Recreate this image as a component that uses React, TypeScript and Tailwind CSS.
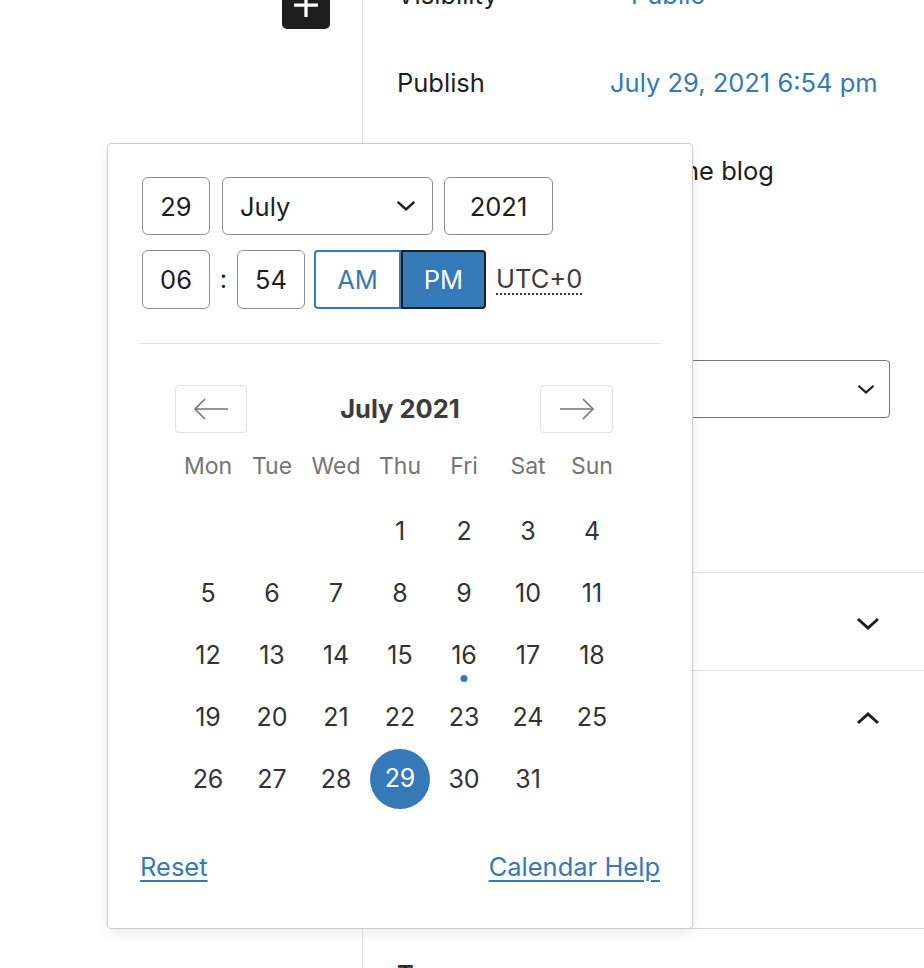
import React from "react";

const BLUE = "#3579b8";

function ChevronDown({ className = "" }: { className?: string }) {
  return (
    <svg viewBox="0 0 24 14" className={className} fill="none" stroke="currentColor" strokeWidth="3">
      <path d="M2 2 L12 11 L22 2" />
    </svg>
  );
}

function ChevronUp({ className = "" }: { className?: string }) {
  return (
    <svg viewBox="0 0 24 14" className={className} fill="none" stroke="currentColor" strokeWidth="3">
      <path d="M2 12 L12 3 L22 12" />
    </svg>
  );
}

function ArrowLeft() {
  return (
    <svg viewBox="0 0 36 24" className="w-[36px] h-[24px]" fill="none" stroke="#757575" strokeWidth="1.6">
      <path d="M2 12 H35" />
      <path d="M12 2 L2 12 L12 22" />
    </svg>
  );
}

function ArrowRight() {
  return (
    <svg viewBox="0 0 36 24" className="w-[36px] h-[24px]" fill="none" stroke="#757575" strokeWidth="1.6">
      <path d="M1 12 H34" />
      <path d="M24 2 L34 12 L24 22" />
    </svg>
  );
}

const weekdays = ["Mon", "Tue", "Wed", "Thu", "Fri", "Sat", "Sun"];

export default function App() {
  const cells: (number | null)[] = [null, null, null];
  for (let d = 1; d <= 31; d++) cells.push(d);
  while (cells.length % 7 !== 0) cells.push(null);

  return (
    <div
      className="relative w-[924px] h-[968px] overflow-hidden bg-white text-[#1e1e1e]"
      style={{ fontFamily: "Inter, 'Noto Sans', sans-serif" }}
    >
      <div className="flex h-full">
        {/* Editor canvas */}
        <div className="w-[362px] shrink-0">
          <div className="ml-[282px] mt-[-19px] w-[48px] h-[48px] rounded-[5px] bg-[#1e1e1e] flex items-center justify-center">
            <svg viewBox="0 0 24 24" className="w-[26px] h-[26px]" fill="none" stroke="white" strokeWidth="3">
              <path d="M12 1 V23 M1 12 H23" />
            </svg>
          </div>
        </div>
        <div className="w-px bg-[#e0e0e0] shrink-0" />
        {/* Sidebar */}
        <div className="flex-1 flex flex-col text-[25.5px]">
          <div className="px-[34px] pb-[12px] shrink-0">
            <div className="h-[88px] mt-[-49px] flex items-center">
              <span className="w-[234px]">Visibility</span>
              <span style={{ color: BLUE }}>Public</span>
            </div>
            <div className="h-[88px] flex items-center">
              <span className="w-[213px]">Publish</span>
              <span style={{ color: BLUE }}>July 29, 2021 6:54 pm</span>
            </div>
            <div className="h-[88px] flex items-center gap-[16px]">
              <span className="w-[32px] h-[32px] border-2 border-[#1e1e1e] rounded-[4px]" />
              <span className="ml-[10px]">Stick to the top of the blog</span>
            </div>
            <div className="h-[89px] flex items-center gap-[16px]">
              <span className="w-[32px] h-[32px] border-2 border-[#1e1e1e] rounded-[4px]" />
              <span>Pending review</span>
            </div>
            <div className="text-[22px] h-[56px] flex items-center">AUTHOR</div>
            <div className="h-[58px] border border-[#757575] rounded-[4px] flex items-center justify-between px-[16px]">
              <span>admin</span>
              <ChevronDown className="w-[18px] h-[11px] mr-[-2px]" />
            </div>
            <div className="h-[142px]" />
          </div>
          <div className="h-px bg-[#e0e0e0] shrink-0" />
          <div className="h-[97px] px-[34px] flex items-center justify-between shrink-0">
            <span className="font-semibold">Categories</span>
            <ChevronDown className="w-[24px] h-[14px] mr-[10px] mt-[4px]" />
          </div>
          <div className="h-px bg-[#e0e0e0] shrink-0" />
          <div className="h-[257px] px-[34px] pt-[40px] flex items-start justify-between shrink-0">
            <span className="font-semibold">Featured image</span>
            <ChevronUp className="w-[24px] h-[14px] mr-[10px]" />
          </div>
          <div className="h-px bg-[#d6d6d6] shrink-0" />
          <div className="px-[34px] pt-[27px] flex justify-between shrink-0">
            <span className="font-semibold text-[#2c2c2c]">Tags</span>
          </div>
        </div>
      </div>

      {/* Popover */}
      <div className="absolute left-[107px] top-[143px] w-[586px] h-[786px] bg-white border border-[#cccccc] rounded-[4px] shadow-[0_4px_14px_rgba(0,0,0,0.08)] px-[32px] pt-[33px]">
        <div className="pl-[2px] flex gap-[11px] text-[25.5px]">
          <div className="w-[68px] h-[58px] border-[1.5px] border-[#8f8f8f] rounded-[6px] flex items-center justify-center pt-[2px]">29</div>
          <div className="w-[211px] h-[58px] border-[1.5px] border-[#8f8f8f] rounded-[6px] flex items-center justify-between pl-[17px] pr-[16px] ml-[1px]">
            <span className="pt-[2px]">July</span>
            <ChevronDown className="w-[20px] h-[12px]" />
          </div>
          <div className="w-[109px] h-[58px] border-[1.5px] border-[#8f8f8f] rounded-[6px] flex items-center justify-center pt-[2px]">2021</div>
        </div>
        <div className="pl-[2px] mt-[15px] flex items-center text-[25.5px]">
          <div className="w-[68px] h-[59px] border-[1.5px] border-[#8f8f8f] rounded-[6px] flex items-center justify-center pt-[2px]">06</div>
          <div className="w-[27px] text-center">:</div>
          <div className="w-[68px] h-[59px] border-[1.5px] border-[#8f8f8f] rounded-[6px] flex items-center justify-center pt-[2px]">54</div>
          <div className="ml-[9px] flex">
            <div
              className="w-[87px] h-[59px] border-2 rounded-l-[4px] flex items-center justify-center pt-[2px]"
              style={{ borderColor: BLUE, color: BLUE }}
            >
              AM
            </div>
            <div
              className="w-[85px] h-[59px] border-2 border-[#1e1e1e] rounded-r-[4px] flex items-center justify-center text-white pt-[2px]"
              style={{ backgroundColor: BLUE }}
            >
              PM
            </div>
          </div>
          <span className="ml-[10px] text-[#3c3c3c] underline decoration-dotted decoration-[2px] underline-offset-[5px]">UTC+0</span>
        </div>

        <div className="mt-[34px] h-px bg-[#dddddd]" />

        <div className="mt-[41px] grid grid-cols-[1fr_auto_1fr] items-center">
          <div className="ml-[35px] w-[72px] h-[48px] border border-[#e0e0e0] rounded-[4px] flex items-center justify-center">
            <ArrowLeft />
          </div>
          <div className="text-[25.5px] font-bold text-[#3c3c3c]">July 2021</div>
          <div className="justify-self-end mr-[47px] w-[73px] h-[48px] border border-[#e0e0e0] rounded-[4px] flex items-center justify-center">
            <ArrowRight />
          </div>
        </div>

        <div className="mx-auto w-[448px] mt-[13px] grid grid-cols-7 h-[40px] items-center text-[23px] text-[#757575]">
          {weekdays.map((w) => (
            <div key={w} className="text-center">{w}</div>
          ))}
        </div>

        <div className="mx-auto w-[448px] mt-[14px] grid grid-cols-7 text-[25px] text-[#333333]">
          {cells.map((d, i) => (
            <div key={i} className="h-[62px] flex items-center justify-center relative">
              {d === 29 ? (
                <div
                  className="w-[60px] h-[60px] rounded-full flex items-center justify-center text-white"
                  style={{ backgroundColor: BLUE }}
                >
                  29
                </div>
              ) : d !== null ? (
                <span className="pt-[1px]">{d}</span>
              ) : null}
              {d === 16 && (
                <span
                  className="absolute left-1/2 top-[51px] -translate-x-1/2 w-[7px] h-[7px] rounded-full"
                  style={{ backgroundColor: BLUE }}
                />
              )}
            </div>
          ))}
        </div>

        <div className="mt-[41px] flex justify-between text-[25.5px] h-[32px] items-center">
          <span className="underline underline-offset-[4px]" style={{ color: BLUE }}>Reset</span>
          <span className="underline underline-offset-[4px]" style={{ color: BLUE }}>Calendar Help</span>
        </div>
      </div>
    </div>
  );
}
